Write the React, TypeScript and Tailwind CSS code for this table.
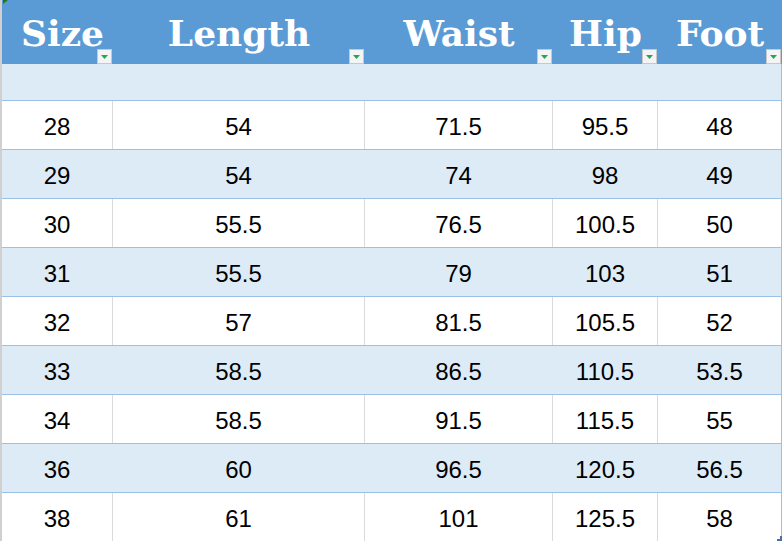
import React from "react";

const cols = ["Size", "Length", "Waist", "Hip", "Foot"];
const widths = ["w-[111px]", "w-[252px]", "w-[188px]", "w-[105px]", "w-[124px]"];

const data: string[][] = [
  ["28", "54", "71.5", "95.5", "48"],
  ["29", "54", "74", "98", "49"],
  ["30", "55.5", "76.5", "100.5", "50"],
  ["31", "55.5", "79", "103", "51"],
  ["32", "57", "81.5", "105.5", "52"],
  ["33", "58.5", "86.5", "110.5", "53.5"],
  ["34", "58.5", "91.5", "115.5", "55"],
  ["36", "60", "96.5", "120.5", "56.5"],
  ["38", "61", "101", "125.5", "58"],
];

function FilterButton() {
  return (
    <div className="absolute right-[1px] bottom-0 w-[15px] h-[15px] bg-[#f4f4f4] border border-[#c8c8c8] flex items-center justify-center">
      <svg width="7" height="4" viewBox="0 0 7 4">
        <polygon points="0,0 7,0 3.5,4" fill="#23a55a" />
      </svg>
    </div>
  );
}

export default function App() {
  return (
    <div className="w-[782px] h-[541px] overflow-hidden bg-white flex relative" style={{ fontFamily: "'Liberation Sans', Arial, sans-serif" }}>
      <div className="w-[2px] shrink-0 bg-[#d0d0d0]" />
      <div className="flex flex-col w-[780px]">
        <div className="flex h-[64px] bg-[#5b9bd5] shrink-0">
          {cols.map((c, i) => (
            <div key={c} className={`${widths[i]} relative shrink-0 text-center`}>
              <div
                className={`pt-[15px] leading-none text-[36px] font-bold text-white whitespace-nowrap ${i === 0 ? "pl-[10px]" : ""}`}
                style={{ fontFamily: "'DejaVu Serif', 'Liberation Serif', serif" }}
              >
                {c}
              </div>
              <FilterButton />
            </div>
          ))}
        </div>
        <div className="flex h-[37px] shrink-0 bg-[#ddebf7] border-b border-[#9bc2e6]">
          {cols.map((c, i) => (
            <div key={c} className={`${widths[i]} shrink-0 ${i === 4 ? "border-r border-[#9bc2e6]" : ""}`} />
          ))}
        </div>
        {data.map((row, r) => {
          const blue = r % 2 === 1;
          return (
            <div key={r} className={`flex h-[49px] shrink-0 border-b border-[#9bc2e6] ${blue ? "bg-[#ddebf7]" : "bg-white"}`}>
              {row.map((v, i) => (
                <div
                  key={i}
                  className={`${widths[i]} shrink-0 text-center text-[24px] text-black pt-[3px] leading-[45px] ${
                    i === 4 ? "border-r border-[#9bc2e6]" : blue ? "border-r border-[#ddebf7]" : "border-r border-[#dadada]"
                  }`}
                >
                  {v}
                </div>
              ))}
            </div>
          );
        })}
      </div>
      <svg className="absolute left-[3px] top-0" width="5" height="4" viewBox="0 0 5 4">
        <polygon points="0,0 5,0 0,4" fill="#1f7a1f" />
      </svg>
      <div className="absolute right-0 bottom-0 w-[5px] h-[5px] border-r-2 border-b-2 border-[#4a6fa8]" />
    </div>
  );
}
